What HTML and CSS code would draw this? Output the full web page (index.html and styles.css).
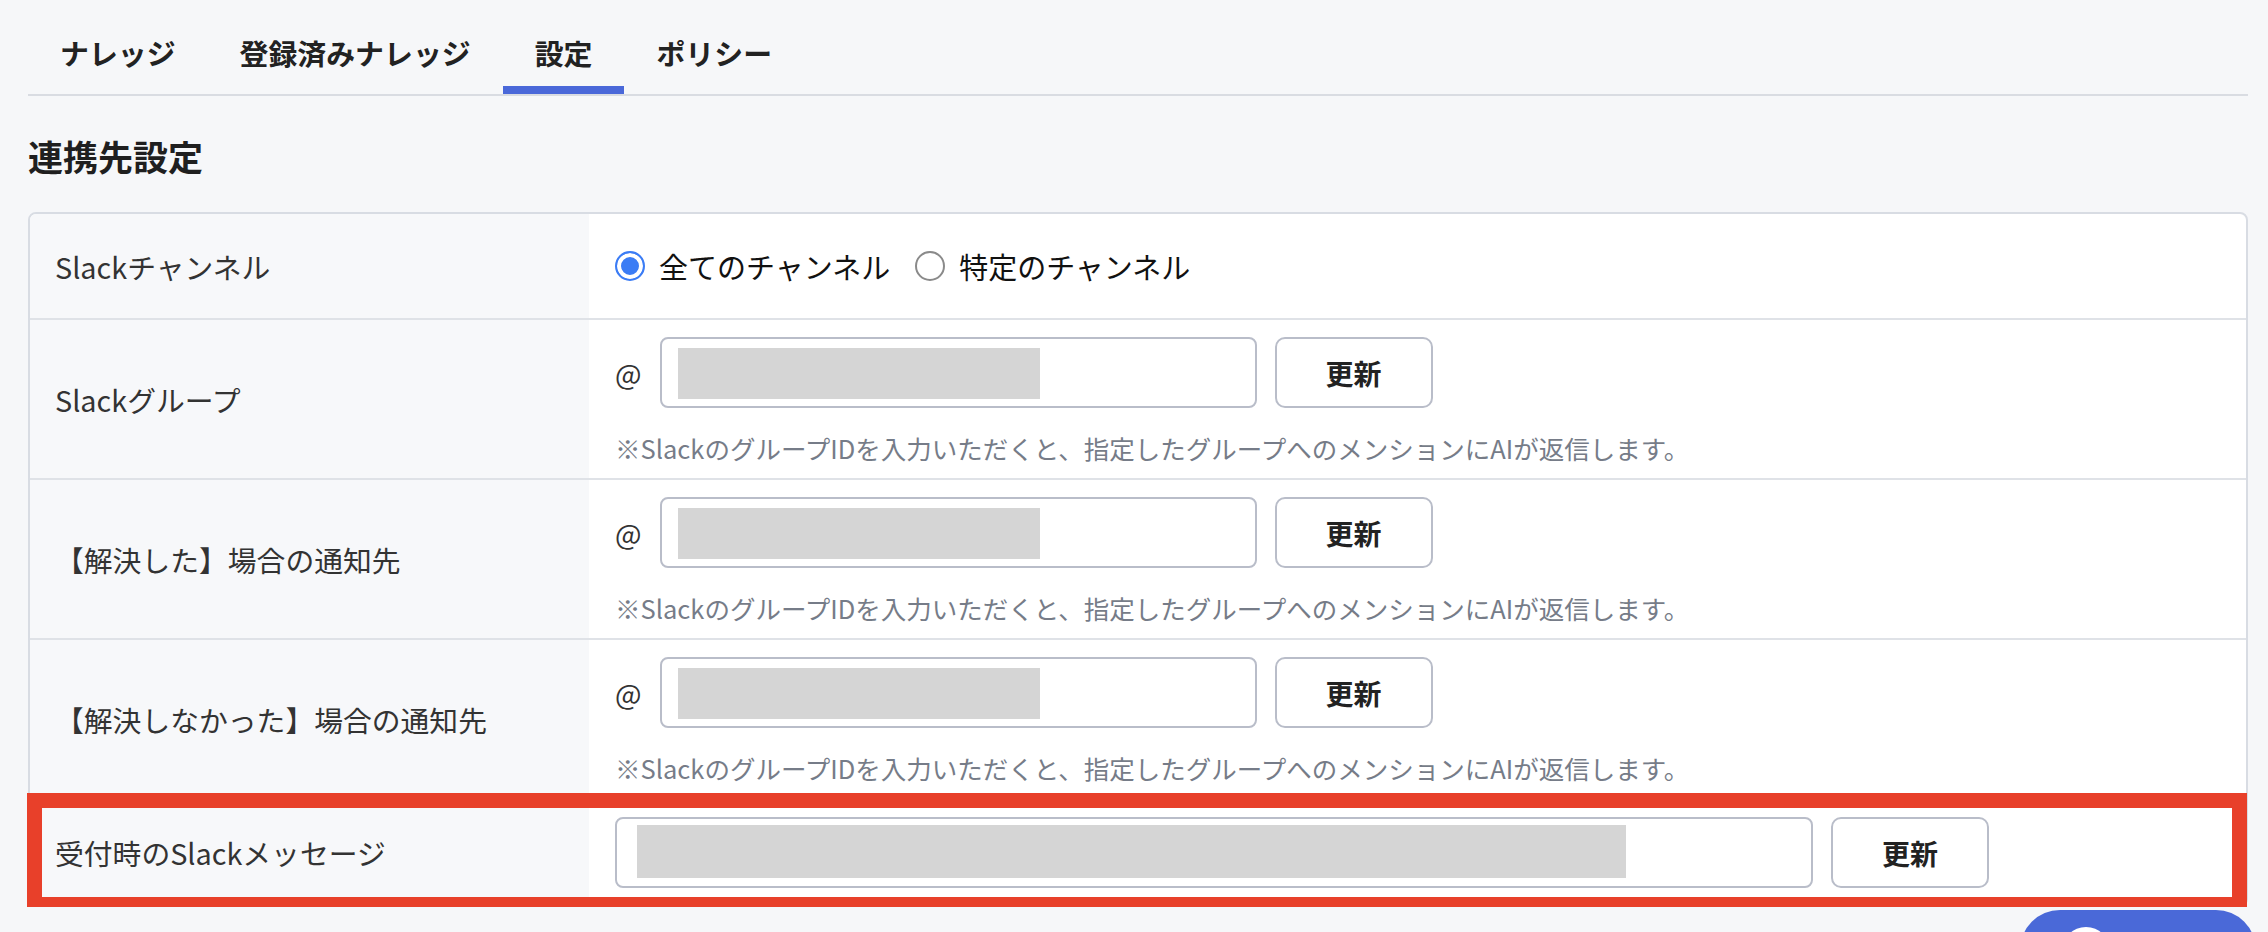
FILE: index.html
```html
<!DOCTYPE html>
<html lang="ja">
<head>
    <meta charset="UTF-8">
    <meta name="viewport" content="width=device-width, initial-scale=1.0">
    <title>設定</title>
    <link rel="stylesheet" href="styles.css">
</head>
<body>
    <div class="page">
        <nav class="tabs">
            <a class="tab">ナレッジ</a>
            <a class="tab">登録済みナレッジ</a>
            <a class="tab active">設定</a>
            <a class="tab">ポリシー</a>
        </nav>

        <h2 class="section-title">連携先設定</h2>

        <div class="settings">
            <div class="row">
                <div class="label">Slackチャンネル</div>
                <div class="value value-radio">
                    <label class="radio"><span class="radio-mark checked"></span>全てのチャンネル</label>
                    <label class="radio"><span class="radio-mark"></span>特定のチャンネル</label>
                </div>
            </div>

            <div class="row">
                <div class="label">Slackグループ</div>
                <div class="value">
                    <div class="field">
                        <span class="at">@</span>
                        <div class="input"><div class="redact"></div></div>
                        <button class="btn">更新</button>
                    </div>
                    <p class="hint">※SlackのグループIDを入力いただくと、指定したグループへのメンションにAIが返信します。</p>
                </div>
            </div>

            <div class="row">
                <div class="label">【解決した】場合の通知先</div>
                <div class="value">
                    <div class="field">
                        <span class="at">@</span>
                        <div class="input"><div class="redact"></div></div>
                        <button class="btn">更新</button>
                    </div>
                    <p class="hint">※SlackのグループIDを入力いただくと、指定したグループへのメンションにAIが返信します。</p>
                </div>
            </div>

            <div class="row">
                <div class="label">【解決しなかった】場合の通知先</div>
                <div class="value">
                    <div class="field">
                        <span class="at">@</span>
                        <div class="input"><div class="redact"></div></div>
                        <button class="btn">更新</button>
                    </div>
                    <p class="hint">※SlackのグループIDを入力いただくと、指定したグループへのメンションにAIが返信します。</p>
                </div>
            </div>

            <div class="row row-last">
                <div class="label">受付時のSlackメッセージ</div>
                <div class="value value-single">
                    <div class="field">
                        <div class="input input-wide"><div class="redact redact-wide"></div></div>
                        <button class="btn">更新</button>
                    </div>
                </div>
                <div class="highlight"></div>
            </div>
        </div>
    </div>

    <div class="help-fab">
        <span class="help-icon"></span>
    </div>
</body>
</html>
```

FILE: styles.css
```css
body {
    margin: 0;
    background-color: #f6f7f9;
    font-family: "Noto Sans CJK JP", "Noto Sans", sans-serif;
    color: #222;
}
.page {
    padding: 21px 20px 0 28px;
}

/* tabs */
.tabs {
    display: flex;
    border-bottom: 2px solid #d9dce2;
}
.tab {
    padding: 10px 32px 13px;
    font-size: 28.9px;
    line-height: 42px;
    font-weight: 700;
    color: #222;
    border-bottom: 8px solid transparent;
    cursor: pointer;
}
.tab.active {
    border-bottom-color: #4a68d9;
}

.section-title {
    margin: 34px 0 30px;
    font-size: 35px;
    line-height: 52px;
    font-weight: 700;
    color: #1f1f1f;
}

/* settings table */
.settings {
    border: 2px solid #d8dce3;
    border-radius: 8px;
    background-color: #fff;
}
.row {
    display: grid;
    grid-template-columns: 559px 1fr;
    border-top: 2px solid #dfe2e7;
}
.row:first-child {
    border-top: none;
}
.row:first-child .label {
    border-top-left-radius: 6px;
}
.label {
    display: flex;
    align-items: center;
    padding: 0 25px;
    background-color: #f7f8fa;
    font-size: 28.8px;
    color: #333;
}
.value {
    padding: 17px 26px 12px;
}
.value-radio {
    display: flex;
    align-items: center;
    gap: 25px;
    padding: 31px 26px;
}
.value-single {
    padding: 17px 26px 17px;
}

/* radios */
.radio {
    display: flex;
    align-items: center;
    gap: 14px;
    font-size: 29px;
    line-height: 42px;
    color: #111;
}
.radio-mark {
    width: 30px;
    height: 30px;
    box-sizing: border-box;
    border: 2px solid #8a8a8a;
    border-radius: 50%;
    background-color: #fff;
}
.radio-mark.checked {
    border-color: #3b7cf5;
    background-color: #3b7cf5;
    box-shadow: inset 0 0 0 4px #fff;
}

/* inputs */
.field {
    display: flex;
    align-items: center;
    gap: 18px;
}
.at {
    font-size: 28px;
    color: #333;
}
.input {
    width: 597px;
    height: 71px;
    box-sizing: border-box;
    padding: 9px 16px;
    border: 2px solid #b9bdc9;
    border-radius: 8px;
    background-color: #fff;
}
.input-wide {
    width: 1198px;
    padding: 6px 20px;
}
.redact {
    width: 362px;
    height: 51px;
    background-color: #d5d5d5;
}
.redact-wide {
    width: 989px;
    height: 53px;
}
.btn {
    width: 158px;
    height: 71px;
    box-sizing: border-box;
    border: 2px solid #b9bdc9;
    border-radius: 10px;
    background-color: #fff;
    font-family: "Noto Sans CJK JP", "Noto Sans", sans-serif;
    font-size: 28px;
    font-weight: 700;
    color: #222;
    cursor: pointer;
}
.hint {
    margin: 22px 0 0;
    font-size: 25.5px;
    line-height: 36px;
    color: #767c88;
}

/* annotation frame */
.row-last {
    position: relative;
}
.highlight {
    position: absolute;
    left: -3px;
    right: -1px;
    top: -7px;
    bottom: -7px;
    border: 15px solid #e8402a;
    z-index: 10;
    pointer-events: none;
}

/* floating help button */
.help-fab {
    position: fixed;
    right: 12px;
    bottom: -58px;
    width: 236px;
    height: 80px;
    border-radius: 40px;
    background-color: #4a69d8;
    z-index: 5;
}
.help-icon {
    position: absolute;
    left: 42px;
    top: 17px;
    width: 48px;
    height: 48px;
    border-radius: 50%;
    background-color: #fff;
}
```
